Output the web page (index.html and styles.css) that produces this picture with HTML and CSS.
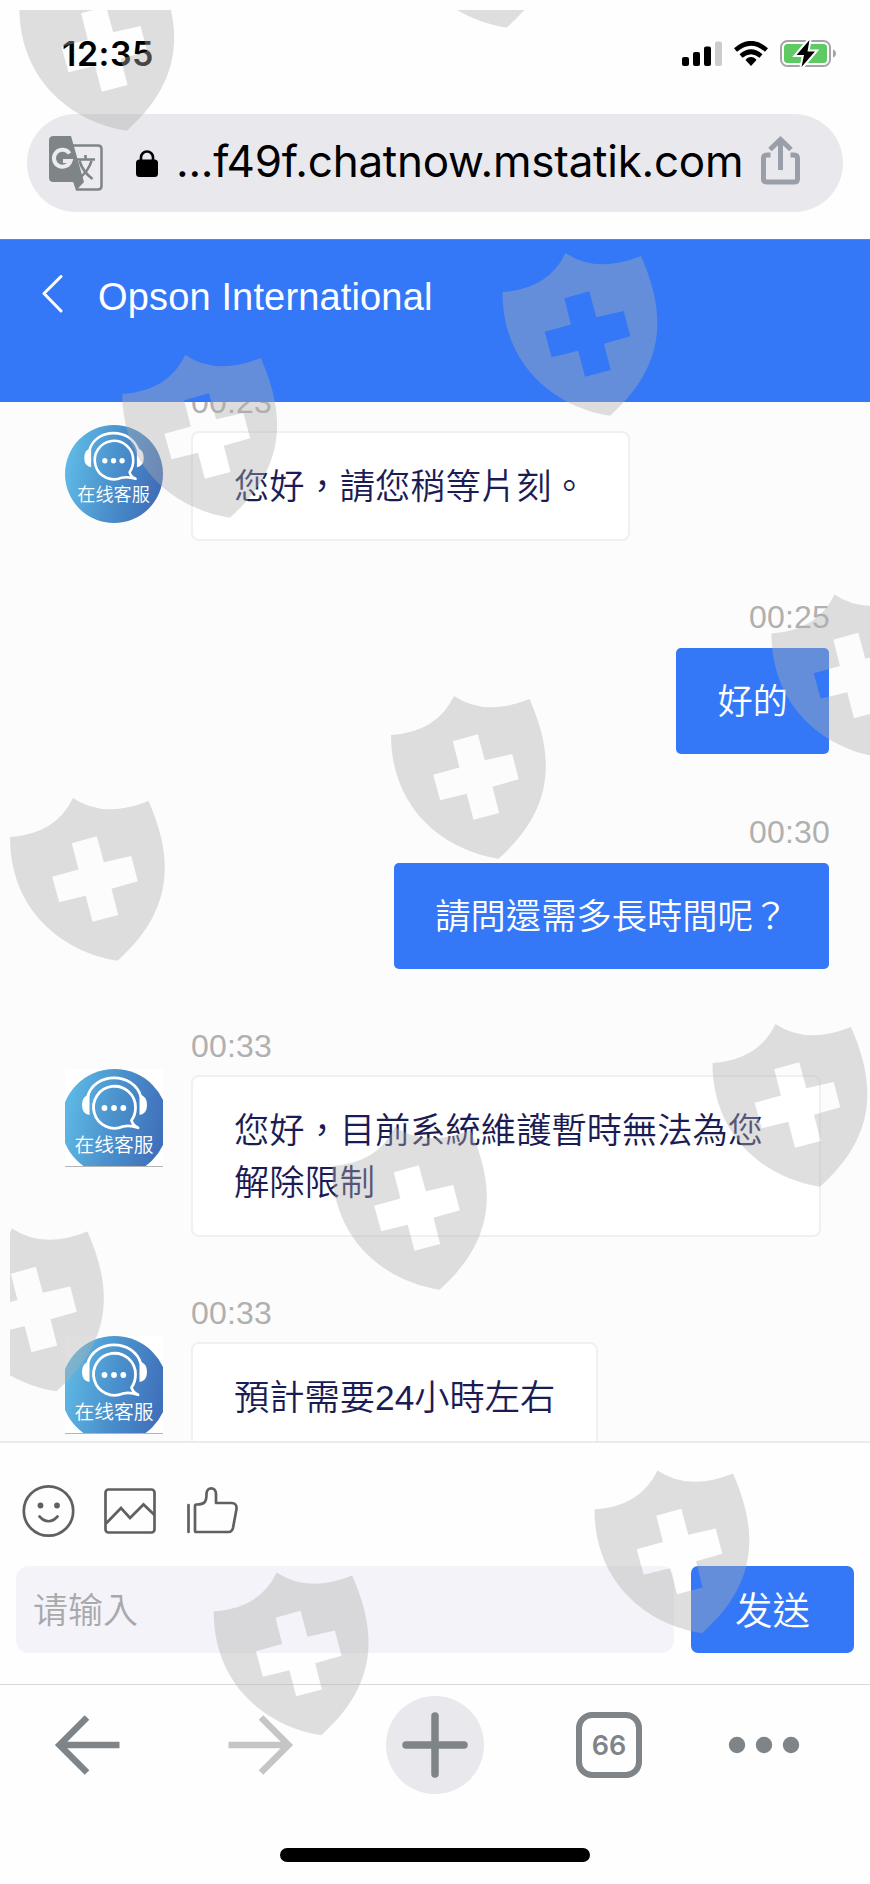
FILE: index.html
```html
<!DOCTYPE html>
<html lang="zh-Hant">
<head>
<meta charset="utf-8">
<title>Opson International</title>
<link rel="stylesheet" href="styles.css">
</head>
<body>
<svg class="defs" width="0" height="0">
  <defs>
    <linearGradient id="sky" x1="0" y1="0.4" x2="1" y2="0.6">
      <stop offset="0" stop-color="#5fbbe6"/>
      <stop offset="0.5" stop-color="#4a90cc"/>
      <stop offset="1" stop-color="#3f6cb8"/>
    </linearGradient>
    <symbol id="agent" viewBox="0 0 107 107">
      <circle cx="53.5" cy="53.5" r="53.5" fill="url(#sky)"/>
      <g fill="none" stroke="#fff" stroke-width="2.8" stroke-linejoin="round">
        <path d="M26.500 28C33 2.500 73 2.500 80 28"/>
        <path d="M74.500 38.500A21 21 0 1 0 62 57.500Q69 56 77 58.700Q71.500 56 70.500 51.500Q74.500 46 74.500 38.500Z"/>
      </g>
      <path fill="#fff" d="M28.500 25.500V46Q21 45 21 36T28.500 25.500ZM78.500 25.500V46Q86 45 86 36T78.500 25.500Z"/>
      <circle cx="43.500" cy="39" r="2.900" fill="#fff"/><circle cx="53" cy="39" r="2.900" fill="#fff"/><circle cx="62.300" cy="39" r="2.900" fill="#fff"/>
      <text class="agent-label" x="53" y="83" text-anchor="middle">在线客服</text>
    </symbol>
    <path id="shield" fill-rule="evenodd" d="M0 39Q46 36 63 0Q94 21 138.500 3C158 48 172 106 107.500 162.700C52 154 0 112 0 39ZM61.800 45.300L68.500 71.500L42.200 78.700L49.200 104.300L75.700 97.700L82.500 123.700L108.200 117L101.500 90.700L127.800 83.300L121.200 58L93.800 64.300L86.800 38.300Z"/>
    <clipPath id="frame"><rect x="10" y="10" width="860" height="1874"/></clipPath>
  </defs>
</svg>

<div class="phone">
  <div class="status">
    <span class="clock">12:35</span>
    <div class="status-icons">
      <svg width="40" height="26" viewBox="0 0 40 26"><rect x="0" y="16" width="7" height="9" rx="2"/><rect x="11" y="11" width="7" height="14" rx="2"/><rect x="22" y="5.500" width="7" height="19.500" rx="2"/><rect x="33" y="0.500" width="7" height="24.500" rx="2" fill="#ccc"/></svg>
      <svg width="34" height="26" viewBox="0 0 34 26"><g fill="none" stroke="#000" stroke-width="4.600"><path d="M1.500 9Q17-4.500 32.500 9"/><path d="M7 15Q17 6.500 27 15"/></g><path d="M17 16Q20.500 16 22.500 19L17 25L11.500 19Q13.500 16 17 16Z"/></svg>
      <svg width="57" height="27" viewBox="0 0 57 27"><rect x="1" y="1" width="49" height="25" rx="6.500" fill="#fff" stroke="#a5a5a8" stroke-width="2"/><rect x="4" y="4" width="43" height="19" rx="3.500" fill="#5fca63"/><path d="M53 9.500Q56 10.500 56 13.500T53 17.500Z" fill="#a5a5a8"/><path d="M29.500-0.500L16.500 15H24L21.500 27.500L35 11.500H27.500Z" stroke="#fff" stroke-width="4"/><path d="M29.500 0L16.500 15H24L21.500 27L35 11.500H27.500Z"/></svg>
    </div>
  </div>

  <div class="address">
    <svg class="translate" width="54" height="55" viewBox="0 0 54 55"><path d="M23 9.500H49Q52.500 9.500 52.500 13V50Q52.500 53.500 49 53.500H28L24 41" fill="#ececf0" stroke="#7f8488" stroke-width="2.500"/><path fill="#7f8488" d="M4.500 0H22L35 46L27.500 54L24.500 46H4.500Q0 46 0 41.500V4.500Q0 0 4.500 0Z"/><path d="M20.500 17.500A8.500 8.500 0 1 0 21.500 25H14" fill="none" stroke="#ececf0" stroke-width="4"/><path d="M27 23.500H46M36.500 19V23.500M30.500 25Q34 36 43.500 43M42.500 25Q39.500 35 30 42.500" fill="none" stroke="#7f8488" stroke-width="2.600"/></svg>
    <svg class="lock" width="22" height="27" viewBox="0 0 22 27"><rect y="9.500" width="22" height="17.500" rx="3.500"/><path d="M5 11V7.500A6 6 0 0 1 17 7.500V11" fill="none" stroke="#000" stroke-width="2.600"/></svg>
    <span class="url">...f49f.chatnow.mstatik.com</span>
    <svg class="share" width="39" height="49" viewBox="0 0 39 49"><g fill="none" stroke="#9a9ea8" stroke-width="5"><path d="M9.500 19H6Q2.500 19 2.500 22.500V43Q2.500 46 6 46H33Q36.500 46 36.500 43V22.500Q36.500 19 33 19H29.500"/><path d="M19.500 34V4M9 13.500L19.500 3.500L30 13.500"/></g></svg>
  </div>

  <header class="header">
    <svg class="back" width="21" height="38" viewBox="0 0 21 38"><path d="M19 1.500L2 18.500L19 36" fill="none" stroke="#fff" stroke-width="3" stroke-linecap="round" stroke-linejoin="round"/></svg>
    <h1 class="title">Opson International</h1>
  </header>

  <main class="chat">
    <section class="message incoming first">
      <div class="avatar"><svg class="whole"><use href="#agent"/></svg></div>
      <div class="body"><time>00:23</time><p class="bubble">您好，請您稍等片刻。</p></div>
    </section>
    <section class="message outgoing">
      <div class="body"><time>00:25</time><p class="bubble">好的</p></div>
    </section>
    <section class="message outgoing">
      <div class="body"><time>00:30</time><p class="bubble">請問還需多長時間呢？</p></div>
    </section>
    <section class="message incoming">
      <div class="avatar cropped"><svg class="large"><use href="#agent"/></svg></div>
      <div class="body"><time>00:33</time><p class="bubble wide">您好，目前系統維護暫時無法為您<br>解除限制</p></div>
    </section>
    <section class="message incoming">
      <div class="avatar cropped"><svg class="large"><use href="#agent"/></svg></div>
      <div class="body"><time>00:33</time><p class="bubble">預計需要<span class="num">24</span>小時左右</p></div>
    </section>
  </main>

  <div class="composer">
    <div class="tools">
      <svg width="53" height="54" viewBox="0 0 53 54"><circle cx="26.500" cy="27" r="24.700" fill="none" stroke="#606060" stroke-width="2.700"/><circle cx="18.500" cy="21.500" r="2.900" fill="#606060"/><circle cx="35" cy="21.500" r="2.900" fill="#606060"/><path d="M17.500 32.500Q26.500 42 35.500 32.500" fill="none" stroke="#606060" stroke-width="2.700" stroke-linecap="round"/></svg>
      <svg width="53" height="54" viewBox="0 0 53 54"><g fill="none" stroke="#606060" stroke-width="2.700"><rect x="1.500" y="5.500" width="49" height="43" rx="3"/><path d="M2 39.500L17 24L26 34L39.500 20.500L50.500 31"/></g></svg>
      <svg width="53" height="54" viewBox="0 0 53 54"><g fill="none" stroke="#606060" stroke-width="2.700" stroke-linecap="round" stroke-linejoin="round"><path d="M2.500 21V48"/><path d="M9 22Q9 20.500 10.500 20.500C18.500 20.500 20.500 18 20.500 10C20.500 2.500 30 2.500 30 10V19H45.500Q51 19 50.500 25L47 44Q46 48 42.500 48H10.500Q9 48 9 46.500Z"/></g></svg>
    </div>
    <div class="entry">
      <div class="field">请输入</div>
      <div class="send">发送</div>
    </div>
  </div>

  <nav class="toolbar">
    <svg class="nav-back" width="66" height="60" viewBox="0 0 66 60"><path d="M33 2.500L5.500 30L33 57.500M5 30H65.500" fill="none" stroke="#7f8488" stroke-width="6.500"/></svg>
    <svg class="nav-forward" width="66" height="60" viewBox="0 0 66 60"><path d="M33 2.500L60.500 30L33 57.500M61 30H0.500" fill="none" stroke="#c5c5c6" stroke-width="6.500"/></svg>
    <div class="plus"><svg width="66" height="66" viewBox="0 0 66 66"><path d="M33 4V62M4 33H62" stroke="#7f8488" stroke-width="7.500" stroke-linecap="round"/></svg></div>
    <div class="tabs">66</div>
    <svg class="more" width="72" height="18" viewBox="0 0 72 18"><g fill="#7f8488"><circle cx="9" cy="9" r="8.200"/><circle cx="36" cy="9" r="8.200"/><circle cx="63" cy="9" r="8.200"/></g></svg>
  </nav>
  <div class="home"></div>

  <svg class="shields" width="870" height="1884" viewBox="0 0 870 1884">
    <g clip-path="url(#frame)" fill="#b0b0b0" fill-opacity="0.4">
      <use href="#shield" x="19.300" y="-32"/><use href="#shield" x="399" y="-135"/>
      <use href="#shield" x="502.500" y="253"/><use href="#shield" x="122.300" y="355"/>
      <use href="#shield" x="391" y="696"/><use href="#shield" x="771.500" y="594.500"/>
      <use href="#shield" x="10" y="798"/><use href="#shield" x="712.500" y="1024"/>
      <use href="#shield" x="332" y="1127"/><use href="#shield" x="-51" y="1228.500"/>
      <use href="#shield" x="594.500" y="1470.500"/><use href="#shield" x="213.700" y="1572.500"/>
    </g>
  </svg>
</div>
</body>
</html>
```
FILE: styles.css
```css
* { box-sizing: border-box; }
body { margin: 0; background: #fefefe; }
svg { display: block; flex: none; }
.defs { position: absolute; }

.phone {
  position: relative;
  width: 870px;
  height: 1884px;
  overflow: hidden;
  display: flex;
  flex-direction: column;
  background: #fefefe;
  font-family: "Liberation Sans", "Noto Sans CJK TC", sans-serif;
}
.shields { position: absolute; left: 0; top: 0; pointer-events: none; }

.status {
  height: 107px;
  margin-bottom: 7px;
  padding: 0 33px 0 62px;
  display: flex;
  align-items: center;
  justify-content: space-between;
}
.clock { font: 600 34px/1 Inter, sans-serif; letter-spacing: 0.5px; }
.status-icons { display: flex; gap: 12px; align-items: center; }

.address {
  height: 98px;
  margin: 0 27px 27px;
  padding-left: 22px;
  border-radius: 49px;
  background: #e8e8ed;
  display: flex;
  align-items: center;
}
.lock { margin-left: 33px; }
.url {
  width: 584px;
  margin: -4px 0 0 18px;
  padding-right: 1px;
  font: 400 44px/1 Inter, sans-serif;
  letter-spacing: -0.25px;
  white-space: nowrap;
}
.share { margin-top: -5px; margin-left: 1px; }

.header {
  height: 163px;
  padding: 35px 0 0 42px;
  border-top: 1px solid #5f87c4;
  background: #3478f7;
  color: #fff;
  display: flex;
  align-items: flex-start;
}
.title { margin: 2px 0 0 35px; font-size: 38px; line-height: 40px; font-weight: 400; letter-spacing: 0.15px; }

.chat {
  height: 1041px;
  overflow: hidden;
  background: #fcfcfc;
  border-bottom: 2px solid #ebebeb;
}
.message { display: flex; align-items: flex-start; margin-bottom: 55px; }
.incoming { padding-left: 65px; }
.outgoing { justify-content: flex-end; padding-right: 41px; margin-bottom: 57px; }
.first { margin-top: -21px; }
.outgoing + .outgoing { margin-bottom: 56px; }
.avatar {
  width: 98px;
  height: 98px;
  margin: 44px 28px 0 0;
  overflow: hidden;
  flex: none;
}
.cropped { background: #fff; border-bottom: 1px solid #b4b4b4; }
.whole { width: 98px; height: 98px; }
.large { width: 107px; height: 107px; margin-left: -4.5px; }
.agent-label { font: 350 19.800px "Noto Sans CJK SC", sans-serif; fill: #fff; }
.body { display: flex; flex-direction: column; align-items: flex-start; }
.outgoing .body { align-items: flex-end; }
time { font-size: 32px; line-height: 42px; height: 44px; margin-bottom: 6px; color: #b0b0b0; letter-spacing: 0.2px; }
.outgoing time { margin-bottom: 8px; margin-right: -1px; }
.bubble {
  margin: 0;
  padding: 28px 41px 26px;
  border: 2px solid #f0f0f0;
  border-radius: 8px;
  background: #fff;
  color: #1c1c55;
  font-size: 35.280px;
  font-weight: 350;
  line-height: 52px;
  white-space: nowrap;
}
.num { font-weight: 400; }
.wide { width: 630px; }
.outgoing .bubble { border: 0; border-radius: 5px; background: #3478f7; color: #fff; }

.composer { height: 242px; padding: 41px 16px 0; border-bottom: 1px solid #d9d9db; }
.tools { display: flex; gap: 29px; margin: 0 0 28px 6px; }
.entry { display: flex; gap: 17px; }
.field {
  width: 658px;
  height: 87px;
  padding-left: 17px;
  border-radius: 13px;
  background: #f3f3f9;
  color: #a9a9ab;
  font: 350 35px/83px "Noto Sans CJK SC", sans-serif;
}
.send {
  width: 163px;
  height: 87px;
  border-radius: 7px;
  background: #3478f7;
  color: #fff;
  text-align: center;
  font: 350 37.500px/83px "Noto Sans CJK TC", sans-serif;
}

.toolbar { height: 120px; padding-left: 54px; display: flex; align-items: center; }
.nav-forward { margin-left: 108px; }
.plus {
  width: 98px;
  height: 98px;
  margin-left: 92px;
  border-radius: 50%;
  background: #e8e8ed;
  display: flex;
  align-items: center;
  justify-content: center;
}
.tabs {
  width: 66px;
  height: 66px;
  margin-left: 92px;
  border: 6.500px solid #7f8488;
  border-radius: 16px;
  color: #7f8488;
  text-align: center;
  font: 600 27px/56px Inter, sans-serif;
}
.more { margin-left: 86px; }
.home { width: 310px; height: 14px; margin: 43px auto 0; border-radius: 7px; background: #000; }
```
